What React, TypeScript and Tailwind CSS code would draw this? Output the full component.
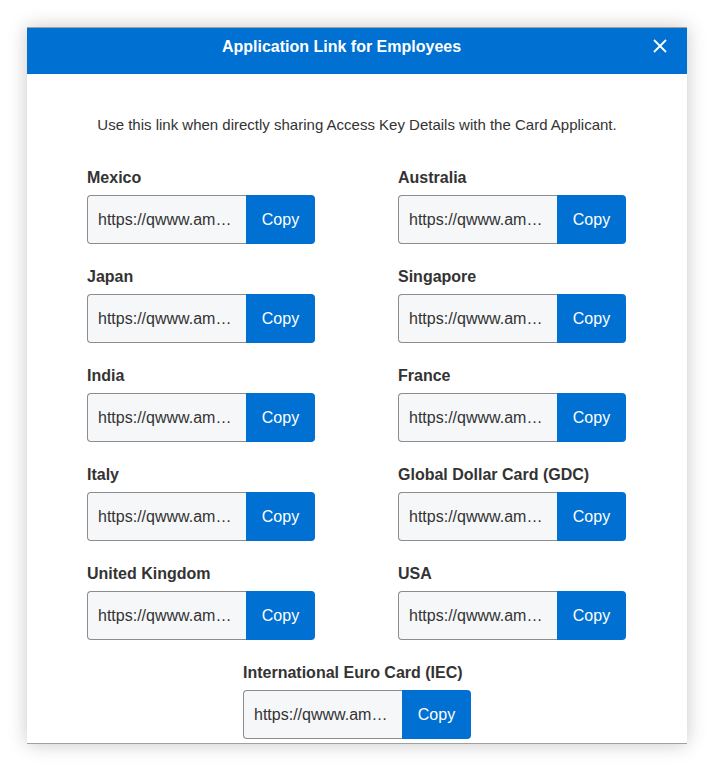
import React from "react";

const items = [
  ["Mexico", "Australia"],
  ["Japan", "Singapore"],
  ["India", "France"],
  ["Italy", "Global Dollar Card (GDC)"],
  ["United Kingdom", "USA"],
];

function LinkField({ label }: { label: string }) {
  return (
    <div className="flex flex-col w-[228px]">
      <div className="text-[16px] leading-[19px] font-bold text-[#333333] whitespace-nowrap">{label}</div>
      <div className="mt-[8px] flex h-[49px]">
        <div className="w-[159px] h-full border border-[#8c8c8c] border-r-0 rounded-l-[4px] bg-[#f6f7f9] flex items-center pl-[10px] pr-[12px] overflow-hidden">
          <span className="block truncate text-[16px] text-[#333333]">https://qwww.americanexpress.com/apply</span>
        </div>
        <button className="w-[69px] h-full bg-[#0070d2] text-white text-[16px] rounded-r-[4px] flex items-center justify-center">
          Copy
        </button>
      </div>
    </div>
  );
}

export default function App() {
  return (
    <div className="w-[714px] h-[772px] bg-white pt-[27px] pl-[27px] overflow-hidden" style={{ fontFamily: '"Liberation Sans", Arial, sans-serif' }}>
      <div className="w-[660px] h-[717px] bg-white overflow-hidden flex flex-col border-t border-b border-[#a0a0a0] shadow-[0_0_18px_rgba(0,0,0,0.22)]">
        <div className="h-[46px] shrink-0 bg-[#0070d2] relative flex justify-center pt-[10px] pr-[31px]">
          <span className="text-white font-bold text-[16px] leading-[18px]">Application Link for Employees</span>
          <button className="absolute right-[20px] top-[11px] w-[14px] h-[14px] flex items-center justify-center">
            <svg width="14" height="14" viewBox="0 0 14 14">
              <path d="M1 1 L13 13 M13 1 L1 13" stroke="white" strokeWidth="1.8" />
            </svg>
          </button>
        </div>
        <div className="flex flex-col px-[60px]">
          <p className="mt-[41px] text-center text-[15px] leading-[20px] text-[#333333]">
            Use this link when directly sharing Access Key Details with the Card Applicant.
          </p>
          <div className="mt-[33px] grid grid-cols-[311px_228px] gap-y-[23px]">
            {items.map(([a, b]) => (
              <React.Fragment key={a}>
                <LinkField label={a} />
                <LinkField label={b} />
              </React.Fragment>
            ))}
          </div>
          <div className="mt-[23px] flex justify-center">
            <LinkField label="International Euro Card (IEC)" />
          </div>
        </div>
      </div>
    </div>
  );
}
